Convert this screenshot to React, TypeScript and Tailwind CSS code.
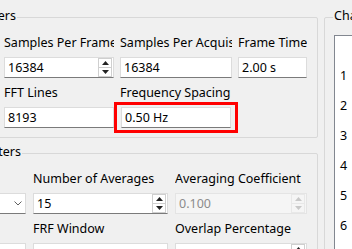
import React from "react";

function Arrow({ up, color }: { up?: boolean; color: string }) {
  return (
    <svg width="7" height="4" viewBox="0 0 7 4">
      <path d={up ? "M0 4 L3.5 0 L7 4 Z" : "M0 0 L3.5 4 L7 0 Z"} fill={color} />
    </svg>
  );
}

function Spin({ disabled }: { disabled?: boolean }) {
  const c = disabled ? "#c8c8c8" : "#222222";
  return (
    <div
      className={
        disabled
          ? "flex flex-col w-[14px] h-[19px] mr-[1px] border border-[#e8e8e8]"
          : "flex flex-col w-[14px] h-[19px] mr-[1px] border border-[#cfcfcf]"
      }
    >
      <div
        className={
          disabled
            ? "flex-1 flex items-center justify-center border-b border-[#e8e8e8]"
            : "flex-1 flex items-center justify-center border-b border-[#cfcfcf]"
        }
      >
        <Arrow up color={c} />
      </div>
      <div className="flex-1 flex items-center justify-center">
        <Arrow color={c} />
      </div>
    </div>
  );
}

function TextBox({
  value,
  spin,
  disabled,
  combo,
}: {
  value: string;
  spin?: boolean;
  disabled?: boolean;
  combo?: boolean;
}) {
  return (
    <div
      className={
        disabled
          ? "h-[21px] flex items-center border border-[#e4e4e4] bg-[#f5f5f5] text-[#8c8c8c]"
          : "h-[21px] flex items-center border border-[#dcdcdc] border-b-[#7a7a7a] bg-white text-black"
      }
    >
      <span className="flex-1 pl-[3px] whitespace-nowrap overflow-hidden leading-[19px]">{value}</span>
      {spin && <Spin disabled={disabled} />}
      {combo && (
        <div className="w-[14px] flex items-center justify-center">
          <svg width="8" height="5" viewBox="0 0 8 5">
            <path d="M0.5 0.5 L4 4 L7.5 0.5" fill="none" stroke="#606060" strokeWidth="1" />
          </svg>
        </div>
      )}
    </div>
  );
}

function Label({ children }: { children: React.ReactNode }) {
  return <div className="h-[16px] leading-[16px] whitespace-nowrap overflow-hidden">{children}</div>;
}

function Field({
  label,
  children,
}: {
  label: string;
  children: React.ReactNode;
}) {
  return (
    <div className="flex flex-col gap-[6px] min-w-0">
      <Label>{label}</Label>
      {children}
    </div>
  );
}

export default function App() {
  return (
    <div className="w-[352px] h-[249px] overflow-hidden bg-[#f0f0f0] flex items-start text-[12.5px] text-black font-['Noto_Sans',sans-serif]">
      {/* left column */}
      <div className="-ml-[100px] w-[418px] shrink-0 flex flex-col">
        {/* Acquisition group */}
        <div className="relative mt-[17px] border border-[#d8d8d8] rounded-[2px] pl-[103px] pt-[17px] pb-[9px]">
          <div className="absolute left-[6px] -top-[10px] w-[110px] h-[16px] leading-[16px] text-right whitespace-nowrap bg-[#f0f0f0] pr-[1px] flex justify-end overflow-visible">
            <span>Acquisition Parameters</span>
          </div>
          <div className="grid grid-cols-[110px_112px_69px] gap-x-[6px] gap-y-[7px]">
            <Field label="Samples Per Frame">
              <TextBox value="16384" spin />
            </Field>
            <Field label="Samples Per Acquisition">
              <TextBox value="16384" />
            </Field>
            <Field label="Frame Time">
              <TextBox value="2.00 s" />
            </Field>
            <Field label="FFT Lines">
              <TextBox value="8193" />
            </Field>
            <Field label="Frequency Spacing">
              <div className="relative ml-[1px] mr-[1px]">
                <TextBox value="0.50 Hz" />
                <div className="absolute left-[-7px] right-[-7px] top-[-5px] bottom-[-5px] border-[3px] border-[#ff0000] pointer-events-none" />
              </div>
            </Field>
            <div />
          </div>
        </div>

        {/* Averaging group */}
        <div className="relative mt-[15px] border border-[#d8d8d8] rounded-[2px] pl-[15px] pt-[17px] pb-[9px]">
          <div className="absolute left-[11px] -top-[10px] w-[110px] h-[16px] leading-[16px] whitespace-nowrap bg-[#f0f0f0] pr-[1px] flex justify-end">
            <span>Averaging Parameters</span>
          </div>
          <div className="grid grid-cols-[110px_135px_132px] gap-x-[7px] gap-y-[7px]">
            <Field label="Type">
              <TextBox value="Linear" combo />
            </Field>
            <Field label="Number of Averages">
              <TextBox value="15" spin />
            </Field>
            <Field label="Averaging Coefficient">
              <TextBox value="0.100" spin disabled />
            </Field>
            <Field label="Window">
              <TextBox value="Hanning" combo />
            </Field>
            <Field label="FRF Window">
              <TextBox value="" combo />
            </Field>
            <Field label="Overlap Percentage">
              <TextBox value="" spin />
            </Field>
          </div>
        </div>
      </div>

      {/* Channels group */}
      <div className="relative ml-[6px] mt-[17px] w-[200px] shrink-0 border border-[#d8d8d8] rounded-[2px] pl-[9px] pt-[17px]">
        <div className="absolute left-[8px] -top-[10px] h-[16px] leading-[16px] px-[1px] bg-[#f0f0f0] whitespace-nowrap">
          Channels
        </div>
        <div className="h-[260px] border border-[#828790] bg-white">
          <div className="h-[25px]" />
          {[1, 2, 3, 4, 5, 6, 7].map((n) => (
            <div key={n} className="h-[30px] leading-[30px] pl-[5px]">
              {n}
            </div>
          ))}
        </div>
      </div>
    </div>
  );
}
